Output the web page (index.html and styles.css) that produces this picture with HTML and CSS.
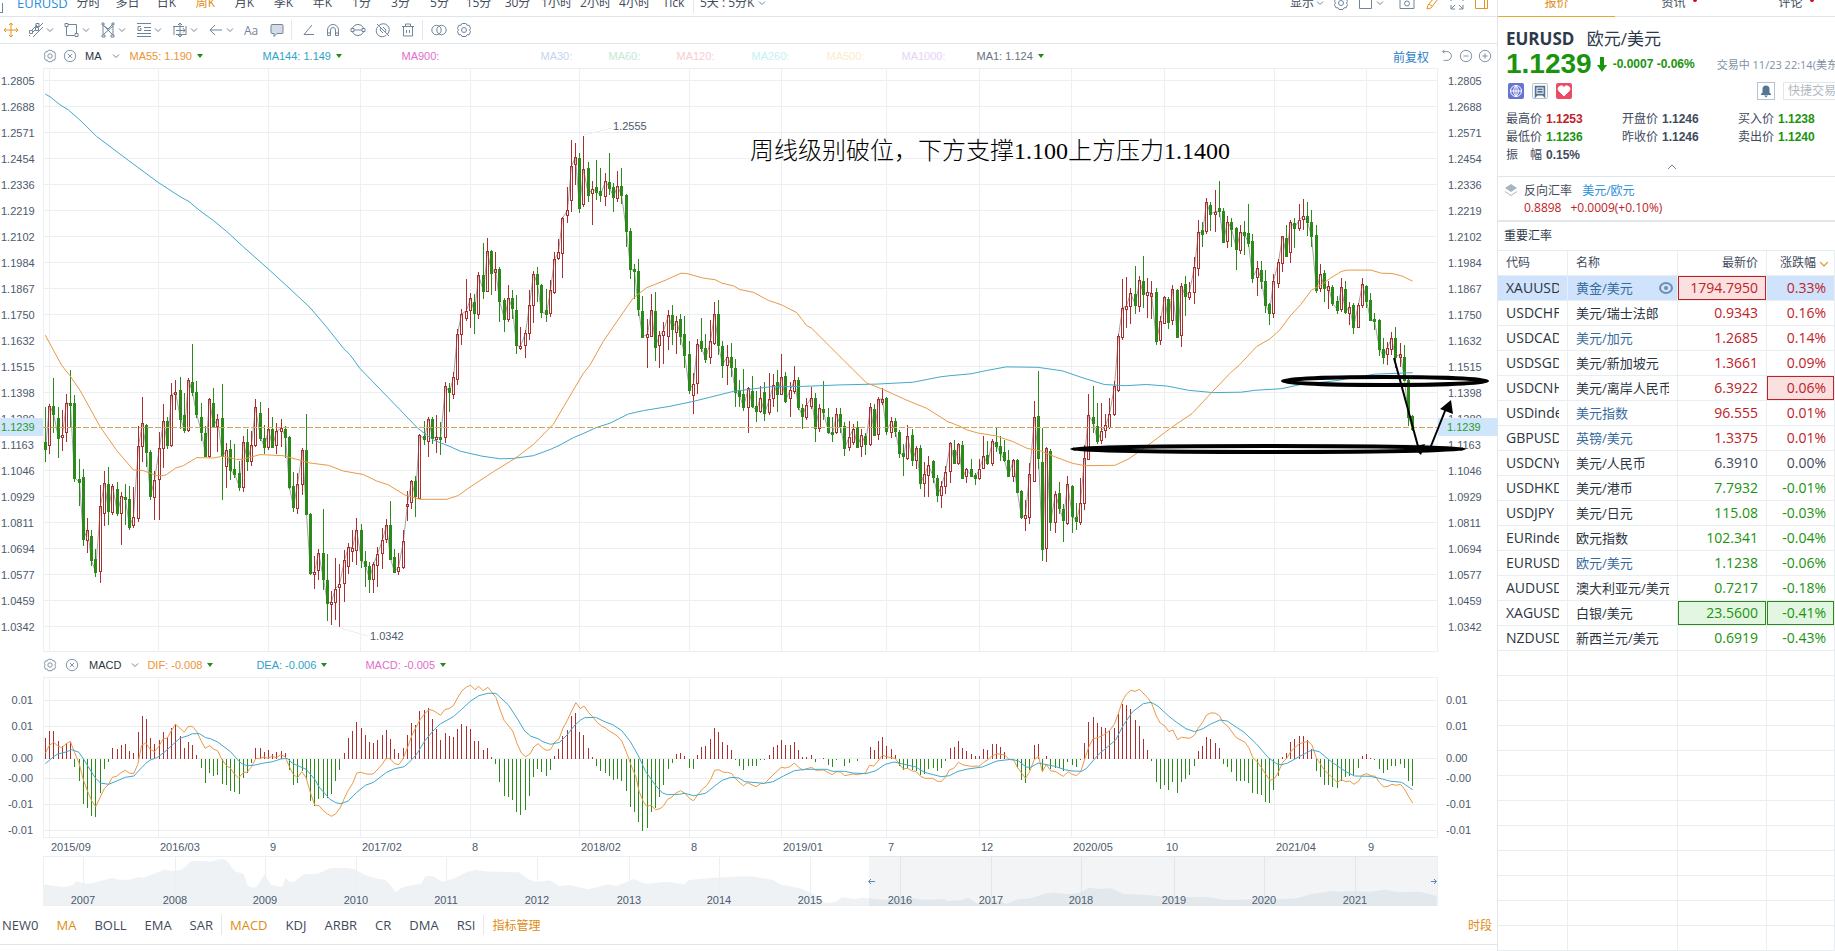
FILE: index.html
```html
<!DOCTYPE html>
<html lang="zh-CN">
<head>
    <meta charset="UTF-8">
    <meta name="viewport" content="width=device-width, initial-scale=1.0">
    <title>EURUSD 欧元/美元</title>
    <link rel="stylesheet" href="styles.css">
</head>
<body>
    <svg class="sprite" aria-hidden="true">
        <symbol id="i-chevron" viewBox="0 0 8 8"><path d="M1 2.500l3 3 3-3"/></symbol>
        <symbol id="i-down" viewBox="0 0 6 4"><path d="M0 0h6L3 4z"/></symbol>
        <symbol id="i-gear" viewBox="0 0 16 16"><path d="M6 1.500h4l1 1.700 2.200.1 1.300 3.200L13.400 8l1.100 1.500-1.300 3.200-2.200.1-1 1.700H6l-1-1.700-2.200-.1-1.300-3.200L2.600 8 1.500 6.500l1.300-3.200L5 3.200z"/><circle cx="8" cy="8" r="2.500"/></symbol>
        <symbol id="i-close" viewBox="0 0 16 16"><circle cx="8" cy="8" r="6.500"/><path d="M5.500 5.500l5 5M10.500 5.500l-5 5"/></symbol>
        <symbol id="i-move" viewBox="0 0 16 16"><path d="M8 1v14M1 8h14M6 3l2-2 2 2M6 13l2 2 2-2M3 6L1 8l2 2M13 6l2 2-2 2"/></symbol>
        <symbol id="i-channel" viewBox="0 0 16 16"><path d="M3 9l6-6M11 5l4-4M1 14l1-1M5 10l3-3M5 15L15 5M1.500 8.500h3v3h-3zM7.500 5.500h3v3h-3zM8 1.500h3v3H8z"/></symbol>
        <symbol id="i-rect" viewBox="0 0 16 16"><path d="M4 2.500h8.500V11M10.500 13.500H2.500V4M1 1.500h3v3H1zM11 11.500h3v3h-3z"/></symbol>
        <symbol id="i-pattern" viewBox="0 0 16 16"><path d="M3 12V3l10 10V4L3 13M3 3l5 4 5-5M2 13h3v2H2zM11 13h3v2h-3zM2 1h2v2H2zM12 1h2v2h-2z"/></symbol>
        <symbol id="i-lines" viewBox="0 0 16 16"><path d="M1 1.500h14M8 5.500h7M8 8.500h7M1 11.500h14M1 14.500h14M5 4.500H2v4h3v-2H4"/></symbol>
        <symbol id="i-measure" viewBox="0 0 16 16"><path d="M2 4v9M1 4.500h11M4 12.500h10M14 4v9M8 1v14M4 8.500h9M6 3l2-2 2 2M6 13l2 2 2-2M11 6l2 2.500-2 2"/></symbol>
        <symbol id="i-arrow" viewBox="0 0 16 16"><path d="M14 8H2M7 3L2 8l5 5"/></symbol>
        <symbol id="i-comment" viewBox="0 0 16 16"><path class="tint" d="M3 2.500h10q1 0 1 1v7q0 1-1 1H8l-3 3v-3H3q-1 0-1-1v-7q0-1 1-1z"/></symbol>
        <symbol id="i-angle" viewBox="0 0 16 16"><path d="M12 3L4 12.500h10"/></symbol>
        <symbol id="i-magnet" viewBox="0 0 16 16"><path d="M2.500 13.500V8a5.500 5.500 0 0 1 11 0v5.500h-3V8a2.500 2.500 0 0 0-5 0v5.500zM2.500 11h3M10.500 11h3"/></symbol>
        <symbol id="i-lock" viewBox="0 0 16 16"><path d="M2.500 6a6 6 0 0 1 11 0M2.500 10a6 6 0 0 0 11 0M1 6.500h3v3H1zM12 6.500h3v3h-3zM4 8h8"/></symbol>
        <symbol id="i-hide" viewBox="0 0 16 16"><path d="M4 3.500a6 6 0 0 1 8.500 8.500M11.500 13A6 6 0 0 1 3 4.500M2 2l12 12M6 6l-1 2 3 3M8 5l3 3-1 2"/></symbol>
        <symbol id="i-trash" viewBox="0 0 16 16"><path d="M2 4.500h12M5.500 4V2h5v2M3.500 5v9h9V5M6.500 8v3M9.500 8v3"/></symbol>
        <symbol id="i-link" viewBox="0 0 16 16"><circle cx="5.500" cy="8" r="4.700"/><circle cx="10.500" cy="8" r="4.700"/></symbol>
        <symbol id="i-undo" viewBox="0 0 16 16"><path d="M3 3h5a5 5 0 0 1 0 10H4M5 1L3 3l2 2"/></symbol>
        <symbol id="i-minus" viewBox="0 0 16 16"><circle cx="8" cy="8" r="6.500"/><path d="M5 8h6"/></symbol>
        <symbol id="i-plus" viewBox="0 0 16 16"><circle cx="8" cy="8" r="6.500"/><path d="M5 8h6M8 5v6"/></symbol>
        <symbol id="i-box" viewBox="0 0 16 16"><path d="M1.500 1.500h12v12h-12z"/></symbol>
        <symbol id="i-camera" viewBox="0 0 16 16"><path d="M1 3.500h14v10H1z"/><circle cx="8" cy="8.500" r="2.500"/></symbol>
        <symbol id="i-pencil" viewBox="0 0 16 16"><path d="M3 14l1-4 7-8 3 2-7 9zM5 9l3 2"/></symbol>
        <symbol id="i-expand" viewBox="0 0 16 16"><path d="M2 6V2h4M10 2h4v4M2 10v4h4M10 14h4v-4M2 14l4-4M14 14l-4-4"/></symbol>
        <symbol id="i-panel" viewBox="0 0 16 16"><path d="M1.500 1.500h12v12h-12zM10.500 1.500v12"/></symbol>
    </svg>

    <main class="chart">
        <nav class="periods">
            <button class="period-first" aria-label="布局"></button>
            <button class="symbol">EURUSD</button>
            <button>分时</button>
            <button>多日</button>
            <button>日K</button>
            <button class="active">周K</button>
            <button>月K</button>
            <button>季K</button>
            <button>年K</button>
            <button>1分</button>
            <button>3分</button>
            <button>5分</button>
            <button>15分</button>
            <button>30分</button>
            <button>1小时</button>
            <button>2小时</button>
            <button>4小时</button>
            <button>Tick</button>
            <span class="sep"></span>
            <button class="auto">5天 : 5分K <svg class="chev"><use href="#i-chevron"/></svg></button>
            <div class="view-tools">
                <button class="auto">显示<svg class="chev"><use href="#i-chevron"/></svg></button>
                <button class="auto" aria-label="设置"><svg class="icon"><use href="#i-gear"/></svg></button>
                <button class="auto window-size" aria-label="窗口"><svg class="icon"><use href="#i-box"/></svg><svg class="chev"><use href="#i-chevron"/></svg></button>
                <button class="auto" aria-label="截图"><svg class="icon"><use href="#i-camera"/></svg></button>
                <button class="auto active" aria-label="画线"><svg class="icon"><use href="#i-pencil"/></svg></button>
                <button class="auto" aria-label="全屏"><svg class="icon"><use href="#i-expand"/></svg></button>
                <button class="auto active" aria-label="侧栏"><svg class="icon"><use href="#i-panel"/></svg></button>
            </div>
        </nav>

        <div class="tools">
            <button class="tool active" aria-label="移动"><svg class="icon"><use href="#i-move"/></svg></button>
            <button class="tool-drop" aria-label="通道"><svg class="icon"><use href="#i-channel"/></svg><svg class="chev"><use href="#i-chevron"/></svg></button>
            <button class="tool-drop" aria-label="矩形"><svg class="icon"><use href="#i-rect"/></svg><svg class="chev"><use href="#i-chevron"/></svg></button>
            <button class="tool-drop" aria-label="形态"><svg class="icon"><use href="#i-pattern"/></svg><svg class="chev"><use href="#i-chevron"/></svg></button>
            <button class="tool-drop" aria-label="黄金分割"><svg class="icon"><use href="#i-lines"/></svg><svg class="chev"><use href="#i-chevron"/></svg></button>
            <button class="tool-drop" aria-label="测量"><svg class="icon"><use href="#i-measure"/></svg><svg class="chev"><use href="#i-chevron"/></svg></button>
            <button class="tool-drop" aria-label="箭头"><svg class="icon"><use href="#i-arrow"/></svg><svg class="chev"><use href="#i-chevron"/></svg></button>
            <button class="tool">Aa</button>
            <button class="tool" aria-label="注释"><svg class="icon"><use href="#i-comment"/></svg></button>
            <span class="sep"></span>
            <button class="tool" aria-label="角度"><svg class="icon"><use href="#i-angle"/></svg></button>
            <button class="tool" aria-label="吸附"><svg class="icon"><use href="#i-magnet"/></svg></button>
            <button class="tool" aria-label="锁定"><svg class="icon"><use href="#i-lock"/></svg></button>
            <button class="tool" aria-label="隐藏"><svg class="icon"><use href="#i-hide"/></svg></button>
            <button class="tool" aria-label="删除"><svg class="icon"><use href="#i-trash"/></svg></button>
            <span class="sep"></span>
            <button class="tool" aria-label="联动"><svg class="icon"><use href="#i-link"/></svg></button>
            <button class="tool" aria-label="画线设置"><svg class="icon"><use href="#i-gear"/></svg></button>
        </div>

        <div class="legend">
            <button aria-label="设置"><svg class="icon small"><use href="#i-gear"/></svg></button>
            <button aria-label="关闭"><svg class="icon small"><use href="#i-close"/></svg></button>
            <button class="legend-name">MA<svg class="chev"><use href="#i-chevron"/></svg></button>
            <span class="first ma55">MA55: 1.190<svg class="down"><use href="#i-down"/></svg></span>
            <span class="wide ma144">MA144: 1.149<svg class="down"><use href="#i-down"/></svg></span>
            <span class="wide ma900">MA900:</span>
            <span class="narrow ma30">MA30:</span>
            <span class="narrow ma60">MA60:</span>
            <span class="mid ma120">MA120:</span>
            <span class="mid ma260">MA260:</span>
            <span class="mid ma500">MA500:</span>
            <span class="mid ma1000">MA1000:</span>
            <span class="wide ma1">MA1: 1.124<svg class="down"><use href="#i-down"/></svg></span>
            <div class="legend-right">
                <button class="link">前复权</button>
                <button aria-label="还原"><svg class="icon small"><use href="#i-undo"/></svg></button>
                <button aria-label="缩小"><svg class="icon small"><use href="#i-minus"/></svg></button>
                <button aria-label="放大"><svg class="icon small"><use href="#i-plus"/></svg></button>
            </div>
        </div>

        <svg class="plot" id="price" viewBox="0 0 1497 584"></svg>

        <div class="legend macd">
            <button aria-label="设置"><svg class="icon small"><use href="#i-gear"/></svg></button>
            <button aria-label="关闭"><svg class="icon small"><use href="#i-close"/></svg></button>
            <button class="legend-name">MACD<svg class="chev"><use href="#i-chevron"/></svg></button>
            <span class="ma55">DIF: -0.008<svg class="down"><use href="#i-down"/></svg></span>
            <span class="ma144">DEA: -0.006<svg class="down"><use href="#i-down"/></svg></span>
            <span class="ma900">MACD: -0.005<svg class="down"><use href="#i-down"/></svg></span>
        </div>

        <svg class="plot" id="macd" viewBox="0 0 1497 179"></svg>
        <svg class="plot" id="navigator" viewBox="0 0 1497 50"></svg>

        <nav class="indicators">
            <button>NEW0</button>
            <button class="active">MA</button>
            <button>BOLL</button>
            <button>EMA</button>
            <button>SAR</button>
            <span class="sep"></span>
            <button class="active">MACD</button>
            <button>KDJ</button>
            <button>ARBR</button>
            <button>CR</button>
            <button>DMA</button>
            <button>RSI</button>
            <span class="sep"></span>
            <button class="active manage">指标管理</button>
            <button class="active manage last">时段</button>
        </nav>
    </main>

    <aside class="side">
        <nav class="side-tabs">
            <button class="active">报价</button>
            <button class="dot">资讯</button>
            <button class="dot">评论</button>
        </nav>

        <section class="quote">
            <h1>EURUSD <span>欧元/美元</span></h1>
            <div class="quote-price">
                <strong>1.1239</strong>
                <svg class="fall" viewBox="0 0 10 15"><path d="M3 0h4v8h3l-5 7-5-7h3z"/></svg>
                <b>-0.0007 -0.06%</b>
                <span class="status">交易中 11/23 22:14(美东)</span>
            </div>
            <div class="quote-actions">
                <button class="badge globe" aria-label="全球"><svg viewBox="0 0 16 16"><circle cx="8" cy="8" r="5.500"/><path d="M2.500 8h11M8 2.500v11M8 2.500q-5 5.500 0 11M8 2.500q5 5.500 0 11"/></svg></button>
                <button class="badge note" aria-label="笔记"><svg viewBox="0 0 16 16"><path d="M3 3h10v11l-2-2H5l-2 2zM5 6h6M5 9h6"/></svg></button>
                <button class="badge heart" aria-label="自选"><svg viewBox="0 0 16 16"><path d="M8 13L2.500 7.500a3 3 0 0 1 5.500-3 3 3 0 0 1 5.500 3z"/></svg></button>
                <button class="bell" aria-label="提醒"><svg viewBox="0 0 16 16"><path d="M3 12V11l1.500-1.500V6a3.500 3.500 0 0 1 7 0v3.500L13 11v1zM6 12.500h4L8 14.500z"/></svg></button>
                <button class="trade" disabled>快捷交易</button>
            </div>
            <dl class="stats">
                <div><dt>最高价</dt><dd class="up">1.1253</dd></div>
                <div><dt>开盘价</dt><dd>1.1246</dd></div>
                <div><dt>买入价</dt><dd class="fell">1.1238</dd></div>
                <div><dt>最低价</dt><dd class="fell">1.1236</dd></div>
                <div><dt>昨收价</dt><dd>1.1246</dd></div>
                <div><dt>卖出价</dt><dd class="fell">1.1240</dd></div>
                <div><dt>振　幅</dt><dd>0.15%</dd></div>
            </dl>
            <button class="fold" aria-label="收起"><svg viewBox="0 0 10 6"><path d="M1 5l4-4 4 4"/></svg></button>
        </section>

        <section class="reverse">
            <svg class="layers" viewBox="0 0 14 14"><path d="M7 1l6 4-6 4-6-4z"/><path d="M1 8l6 4 6-4v1l-6 4-6-4z"/></svg>
            <div>
                <p>反向汇率 <a href="#">美元/欧元</a></p>
                <p class="up"><span>0.8898</span><span>+0.0009(+0.10%)</span></p>
            </div>
        </section>

        <h2>重要汇率</h2>
        <table>
            <colgroup><col class="c-code"><col class="c-name"><col class="c-price"><col class="c-pct"></colgroup>
            <thead>
                <tr><th>代码</th><th>名称</th><th>最新价</th><th>涨跌幅<svg class="chev"><use href="#i-chevron"/></svg></th></tr>
            </thead>
            <tbody id="rates"></tbody>
        </table>
    </aside>
    <script src="script.js"></script>
</body>
</html>
```

FILE: styles.css
```css
* {
    box-sizing: border-box;
}

body {
    margin: 0;
    display: flex;
    min-height: 100vh;
    overflow: hidden;
    background: #fff;
    color: #3f4b5c;
    font-family: "Open Sans", "Noto Sans CJK SC", sans-serif;
    font-size: 12px;
}

button {
    padding: 0;
    border: 0;
    background: none;
    color: inherit;
    font: inherit;
    white-space: nowrap;
    cursor: pointer;
}

.sprite {
    position: absolute;
    width: 0;
    height: 0;
}

.icon {
    width: 16px;
    height: 16px;
    fill: none;
    stroke: #70859b;
}

.icon.small {
    width: 14px;
    height: 14px;
}

.active .icon {
    stroke: #e5941d;
}

.chev {
    width: 8px;
    height: 8px;
    fill: none;
    stroke: #70859b;
}

.down {
    width: 6px;
    height: 4px;
    margin-left: 5px;
    fill: #27881b;
}

.tint {
    fill: #d3dbe4;
}

.sep {
    flex: none;
    width: 1px;
    height: 20px;
    background: #e3e8ee;
}

.active {
    color: #e08b14;
}

/* chart side */
.chart {
    flex: 1;
    min-width: 0;
}

.periods {
    display: flex;
    align-items: flex-end;
    height: 17px;
    padding-bottom: 3px;
    border-bottom: 1px solid #dfe5ea;
}

.periods button {
    flex: none;
    width: 39px;
    height: 20px;
    line-height: 20px;
}

.periods .period-first {
    width: 3px;
    height: 10px;
    border: 1px solid #70859b;
    border-width: 0 1px 1px 0;
}

.periods .symbol {
    width: 66px;
    padding-left: 14px;
    text-align: left;
    color: #2a8fdb;
    font-size: 13px;
}

.periods .auto {
    display: flex;
    align-items: center;
    gap: 4px;
    width: auto;
}

.periods .sep {
    margin: 0 6px 0 0;
}

.view-tools {
    display: flex;
    gap: 9px;
    margin-left: auto;
    padding-right: 7px;
}

.view-tools .auto {
    gap: 2px;
}

.view-tools .window-size {
    margin-right: 6px;
}

.tools {
    display: flex;
    align-items: center;
    height: 27px;
    padding-left: 3px;
    border-bottom: 1px solid #dfe5ea;
}

.tools button {
    display: flex;
    flex: none;
    align-items: center;
    color: #70859b;
}

.tool {
    width: 16px;
    margin-right: 9px;
}

.tool-drop {
    gap: 2px;
    width: 36px;
}

.tools .sep {
    margin: 0 8px 0 -3px;
}

.legend {
    display: flex;
    align-items: center;
    height: 24px;
    padding-left: 43px;
    font-family: "Liberation Sans", "Noto Sans CJK SC", sans-serif;
    font-size: 11px;
    white-space: nowrap;
}

.legend button {
    display: flex;
    align-items: center;
    margin-right: 6px;
}

.legend .legend-name {
    gap: 10px;
    margin: 0 10px 0 2px;
    color: #2c3542;
}

.legend span {
    flex: none;
    display: flex;
    align-items: center;
}

.legend .first {
    width: 133px;
}

.legend .wide {
    width: 139px;
}

.legend .narrow {
    width: 68px;
}

.legend .mid {
    width: 75px;
}

.legend.macd {
    height: 25px;
}

.macd button {
    margin-right: 8px;
}

.macd .legend-name {
    margin-right: 8px;
}

.macd span {
    width: 109px;
}

.legend-right {
    display: flex;
    margin-left: auto;
}

.legend-right .link {
    margin-right: 11px;
    color: #2a7fc9;
    font-size: 12px;
}

.legend-right button {
    margin-right: 5px;
}

.ma55 { color: #ec9433; }
.ma144 { color: #2ea3c9; }
.ma900 { color: #df6fca; }
.ma30 { color: #c3d6ec; }
.ma60 { color: #c4e8d4; }
.ma120 { color: #f8cdd2; }
.ma260 { color: #c2f1f4; }
.ma500 { color: #fbeccb; }
.ma1000 { color: #e5d3f5; }
.ma1 { color: #6b737d; }

.plot {
    display: block;
    width: 100%;
    height: auto;
    fill: none;
    font-family: "Liberation Sans", sans-serif;
    font-size: 11px;
}

.plot text {
    fill: #4c5a6d;
}

.plot .end {
    text-anchor: end;
}

.plot .center {
    text-anchor: middle;
}

.grid {
    stroke: #edf0f2;
    shape-rendering: crispEdges;
}

.line-dif { stroke: #ea9a45; }
.line-dea { stroke: #42a9cc; }
.line-ma1 { stroke: #a3a3a3; }

.candle {
    shape-rendering: crispEdges;
}

.candle.r {
    stroke: #a93030;
}

.candle.g {
    stroke: #2b8a1a;
}

.last-line {
    stroke: #cfa65c;
    stroke-dasharray: 6 2;
}

.last-tag {
    fill: #cfe5fb;
}

.plot .last-text {
    fill: #2b9a2b;
}

.plot .note {
    fill: #000;
    font-family: "Liberation Serif", "Noto Sans CJK SC", serif;
    font-size: 24px;
    font-weight: 300;
}

.drawing {
    stroke: #000;
    stroke-width: 4;
}

.drawing .head {
    fill: #000;
    stroke: none;
}

.drawing .shaft {
    stroke-width: 2;
}

.area {
    fill: #eff2f5;
}

.window {
    fill: #8292a5;
    fill-opacity: 0.1;
}

.handle {
    stroke: #5d84b5;
}

.indicators {
    display: flex;
    align-items: center;
    gap: 18px;
    height: 39px;
    padding: 0 5px 0 2px;
    border-bottom: 1px solid #dfe5ea;
    font-size: 13px;
}

.indicators .sep {
    margin: 0 -10px;
}

.indicators .manage {
    font-size: 12px;
}

.indicators .last {
    margin-left: auto;
}

/* quote side */
.side {
    flex: none;
    width: 338px;
    height: 100vh;
    overflow: hidden;
    border-left: 1px solid #dfe5ea;
}

.side-tabs {
    display: flex;
    height: 17px;
    border-bottom: 1px solid #dfe5ea;
}

.side-tabs button {
    position: relative;
    flex: none;
    width: 117px;
    height: 17px;
    padding-bottom: 12px;
    line-height: 6px;
}

.side-tabs .active {
    border-bottom: 1px solid #e5a637;
}

.side-tabs .dot::after {
    content: "";
    position: absolute;
    top: -2px;
    right: 35px;
    width: 4px;
    height: 4px;
    border-radius: 50%;
    background: #d0021b;
}

.quote {
    height: 160px;
    padding: 10px 0 0 8px;
    border-bottom: 1px solid #dfe5ea;
    white-space: nowrap;
}

h1 {
    margin: 0;
    color: #2c3949;
    font-size: 17px;
    line-height: 24px;
}

h1 span {
    margin-left: 8px;
    font-weight: 400;
}

.quote-price {
    display: flex;
    align-items: center;
    height: 26px;
    color: #1a930d;
    font-family: "Liberation Sans", sans-serif;
}

.quote-price strong {
    font-size: 28px;
}

.fall {
    flex: none;
    width: 10px;
    height: 15px;
    margin: 0 6px 0 5px;
    fill: #1a930d;
}

.status {
    margin-left: 22px;
    color: #8290a3;
    font-family: "Open Sans", "Noto Sans CJK SC", sans-serif;
    font-size: 11px;
}

.quote-actions {
    display: flex;
    align-items: center;
    gap: 8px;
    height: 28px;
    padding-left: 2px;
}

.badge {
    flex: none;
    width: 16px;
    height: 16px;
    border-radius: 2px;
}

.badge svg,
.bell svg {
    display: block;
    width: 100%;
    fill: none;
    stroke: #fff;
}

.globe {
    background: #6674d4;
}

.note.badge {
    border: 1px solid #b6c2d0;
}

.note.badge svg {
    stroke: #52708f;
    stroke-width: 2;
}

.heart {
    background: #ec4b66;
}

.heart svg {
    fill: #fff;
}

.bell {
    flex: none;
    width: 18px;
    height: 18px;
    margin-left: 177px;
    border: 1px solid #b6c2d0;
}

.bell svg {
    fill: #557595;
    stroke: none;
}

.trade {
    flex: none;
    height: 18px;
    padding: 0 4px;
    border: 1px solid #e3e6ea;
    color: #b3b9c1;
    line-height: 16px;
}

.stats {
    display: grid;
    grid-template-columns: repeat(3, 116px);
    margin: 5px 0 0;
    line-height: 18px;
}

.stats div {
    display: flex;
    gap: 4px;
}

.stats dd {
    margin: 0;
    font-family: "Liberation Sans", sans-serif;
    font-weight: 700;
}

.up,
.stats .up {
    color: #c02127;
}

.stats .fell,
.fell {
    color: #1a930d;
}

.fold {
    display: block;
    width: 10px;
    height: 6px;
    margin: 0 0 0 161px;
}

.fold svg {
    display: block;
    fill: none;
    stroke: #70859b;
}

.reverse {
    display: flex;
    gap: 6px;
    height: 45px;
    padding: 5px 0 0 6px;
    border-bottom: 2px solid #e2e6e9;
}

.reverse p {
    margin: 0;
    line-height: 17px;
}

.reverse a {
    margin-left: 7px;
    color: #2a8fdb;
    text-decoration: none;
}

.reverse .up span {
    margin-right: 9px;
}

.layers {
    width: 14px;
    height: 14px;
    margin-top: 1px;
    fill: #a6b4c3;
}

h2 {
    margin: 0;
    padding-left: 6px;
    border-bottom: 1px solid #e4eaee;
    color: #2c3949;
    font-size: 12px;
    font-weight: 400;
    line-height: 28px;
}

table {
    width: 100%;
    table-layout: fixed;
    border-spacing: 0;
    font-size: 14px;
}

.c-code { width: 70px; }
.c-name { width: 110px; }
.c-price { width: 89px; }

th,
td {
    height: 25px;
    padding: 0 8px;
    border: 1px solid #e9eef1;
    border-width: 0 1px 1px 0;
    text-align: right;
    line-height: 24px;
    white-space: nowrap;
}

th {
    font-size: 12px;
    font-weight: 400;
}

th:last-child {
    padding-right: 5px;
}

th .chev {
    width: 10px;
    height: 10px;
    margin-left: 3px;
    stroke: #e5941d;
    vertical-align: middle;
}

th:nth-child(-n+2),
td:nth-child(-n+2) {
    text-align: left;
}

td:nth-child(-n+2) {
    color: #2c3542;
}

td:nth-child(2) {
    font-size: 13px;
}

td span {
    display: block;
    height: 24px;
    overflow: hidden;
}

tr td.blue {
    color: #376a9e;
}

tr.selected td {
    background: #cfe4fc;
}

td .with-eye {
    display: flex;
    align-items: center;
    justify-content: space-between;
    margin-right: -4px;
}

.eye {
    width: 14px;
    height: 12px;
    fill: none;
    stroke: #6f8db0;
    stroke-width: 2;
}

tr td.flash-up {
    background: #fbe0e0;
    box-shadow: inset 0 0 0 1px #c02127;
}

tr td.flash-down {
    background: #e3f6e1;
    box-shadow: inset 0 0 0 1px #2b8a1a;
}
```

FILE: script.js
```js
// one weekly candle per item: colour, high, body top, body bottom, low
const candles = `g 907 998 1017 1050,r 898 903 1007 1029,g 831 905 924 975,g 907 936 988 1040,r 915 979 986 1022,r 873 895 973 999,g 810 895 901 960,g 875 896 1092 1103,g 1043 1095 1102 1165,g 1069 1090 1251 1270,
r 1197 1229 1253 1287,g 1227 1244 1307 1322,g 1277 1304 1337 1351,r 1111 1166 1336 1367,r 1073 1106 1183 1217,g 1064 1108 1178 1215,r 1107 1113 1180 1188,g 1102 1121 1183 1191,r 1130 1139 1183 1267,g 1107 1142 1148 1214,
g 1113 1147 1219 1228,r 1116 1194 1216 1222,r 956 1009 1198 1206,r 881 949 1009 1050,g 950 954 1023 1064,g 1019 1024 1138 1151,r 1075 1098 1141 1201,r 972 1013 1096 1201,r 898 943 1013 1065,g 932 943 1005 1016,
r 844 875 1005 1011,r 837 868 874 914,g 828 863 937 963,g 870 928 967 975,r 832 836 968 973,g 742 841 868 877,g 840 868 924 936,g 896 934 972 996,g 956 974 1034 1037,r 882 886 1034 1040,
g 857 896 956 959,r 924 938 956 1023,g 847 936 1036 1150,r 1001 1019 1060 1118,g 993 1017 1072 1097,g 1004 1068 1082 1092,g 1049 1080 1115 1126,r 983 997 1117 1128,g 964 997 1048 1075,r 970 1007 1048 1060,
r 886 908 1005 1010,g 894 922 988 996,g 954 988 1011 1030,r 909 965 1011 1018,g 932 964 1010 1014,r 948 970 1007 1030,r 938 962 970 1010,g 957 963 985 1040,g 982 985 1117 1120,g 1077 1113 1167 1180,
r 1080 1109 1171 1186,r 1014 1019 1108 1136,g 925 1019 1186 1188,g 1184 1187 1340 1347,r 1297 1338 1344 1382,r 1278 1288 1333 1358,g 1173 1288 1355 1385,g 1291 1360 1420 1466,r 1388 1415 1422 1477,r 1301 1381 1417 1463,
r 1317 1370 1376 1482,r 1281 1307 1367 1416,r 1262 1273 1321 1342,r 1228 1274 1282 1312,r 1197 1227 1280 1320,g 1213 1227 1307 1327,g 1284 1310 1322 1376,g 1313 1322 1355 1393,r 1312 1318 1355 1393,r 1273 1291 1319 1376,
r 1223 1254 1289 1331,r 1199 1216 1251 1262,g 1152 1216 1303 1305,g 1278 1298 1337 1341,r 1287 1325 1336 1347,r 1228 1257 1325 1330,r 1126 1159 1165 1205,r 1098 1101 1154 1172,g 1086 1101 1140 1194,r 976 980 1145 1147,
g 943 982 991 1006,r 932 937 996 1037,g 932 938 989 1004,r 927 984 990 1027,g 945 984 990 1032,r 841 853 985 1001,g 845 857 868 920,r 815 829 874 885,r 703 716 833 848,r 650 664 717 744,
r 572 655 673 682,r 609 623 654 700,g 612 632 660 715,r 555 563 665 677,g 477 563 603 624,r 466 500 603 605,g 497 498 556 613,r 502 546 553 604,g 542 546 629 684,g 622 626 677 712,
r 588 622 677 684,g 601 623 649 676,g 613 652 746 767,r 698 748 753 757,r 706 713 745 778,r 601 640 714 731,r 551 559 641 686,g 541 559 585 632,g 585 587 659 674,g 598 654 663 684,
r 575 602 662 671,r 502 521 607 612,r 468 503 518 522,r 411 413 505 570,r 332 393 406 425,r 209 277 367 396,r 217 254 273 326,g 243 257 387 401,r 199 286 375 383,g 267 283 352 371,
r 315 336 348 431,g 262 332 345 365,g 281 341 353 371,r 296 317 356 381,g 243 319 334 353,g 322 333 357 396,r 291 330 360 371,g 281 329 353 376,g 350 353 446 488,g 439 446 545 572,
g 533 546 552 624,g 520 551 650 668,g 617 656 723 726,r 677 717 723 804,r 612 654 720 724,g 607 656 749 786,r 708 719 745 804,r 684 708 719 794,r 654 667 722 757,g 641 667 702 744,
r 668 682 710 768,g 663 678 720 744,g 668 716 770 804,g 734 768 861 874,r 817 846 875 924,r 730 741 845 872,g 675 735 753 762,g 717 752 780 791,r 680 735 775 794,r 632 664 739 744,
g 627 664 746 770,g 735 747 796 830,r 744 775 798 848,g 739 776 801 828,g 782 805 868 906,g 835 863 877 906,g 808 873 906 916,r 855 857 907 974,g 826 866 905 909,g 864 903 916 946,
r 852 882 918 923,g 841 868 923 942,r 818 887 921 928,r 821 848 884 906,g 810 841 872 920,r 768 829 873 875,g 815 826 890 895,r 842 861 884 933,r 800 837 866 873,g 829 836 908 915,
g 899 909 929 964,r 883 902 934 940,r 855 882 903 911,g 871 882 961 998,r 899 909 961 972,g 838 912 919 940,g 909 933 973 978,g 932 973 978 997,r 909 926 973 977,g 910 925 956 974,
g 947 957 1014 1035,r 943 984 1011 1021,r 951 963 999 1006,g 943 959 1010 1013,r 964 980 1008 1037,g 974 982 1003 1031,r 896 908 1003 1008,g 899 912 979 982,r 880 887 976 994,r 857 885 893 902,
g 881 882 970 980,r 932 944 972 987,g 935 943 970 986,g 966 972 1026 1040,g 1003 1028 1036 1086,r 953 983 1041 1044,g 965 981 1046 1060,r 1008 1015 1045 1070,g 1005 1015 1106 1120,r 1050 1083 1106 1141,
r 1036 1059 1085 1141,g 1044 1049 1090 1104,g 1084 1091 1137 1154,r 1100 1113 1136 1170,r 1060 1076 1114 1134,r 997 1001 1075 1106,g 993 1018 1054 1056,r 1001 1003 1052 1058,g 996 1005 1091 1092,r 1066 1069 1088 1104,
g 1043 1068 1087 1090,g 1079 1085 1092 1110,r 1043 1068 1093 1097,r 983 1036 1067 1070,g 996 1031 1054 1059,r 991 996 1054 1060,g 962 997 1009 1025,g 982 1009 1026 1047,g 993 1023 1046 1050,g 1019 1045 1086 1089,
r 1043 1046 1087 1103,g 1043 1046 1130 1132,g 1123 1127 1195 1199,r 1149 1189 1198 1230,r 1053 1083 1193 1212,r 892 934 1099 1102,g 813 931 1039 1069,g 962 1051 1277 1309,r 1011 1014 1276 1311,g 1016 1021 1208 1230,
r 1127 1134 1208 1235,g 1103 1132 1171 1185,g 1159 1172 1203 1259,r 1087 1108 1211 1214,g 1110 1112 1192 1235,g 1158 1194 1205 1229,r 1092 1157 1206 1214,r 1006 1040 1157 1176,r 874 928 1043 1046,g 852 934 949 975,
g 895 957 996 1004,r 896 969 992 1004,r 924 955 968 988,r 884 926 960 963,r 840 852 925 930,r 715 720 863 867,r 572 648 725 731,r 567 643 650 699,r 597 609 644 690,g 538 611 640 664,
r 565 575 643 658,g 513 577 612 648,r 569 607 614 675,r 578 609 616 677,g 595 606 734 744,r 668 682 731 744,r 617 619 686 690,g 619 625 684 703,r 589 599 680 693,g 598 601 724 727,
r 583 591 719 750,g 564 586 617 668,r 579 605 620 628,r 515 541 607 637,r 418 449 544 565,g 424 443 454 488,r 361 372 446 455,g 370 379 402 446,r 340 396 403 449,g 316 387 395 410,
g 388 395 475 477,r 408 422 472 490,g 412 424 441 488,g 436 439 493 549,r 432 449 496 508,g 421 449 456 510,g 376 452 478 488,g 454 473 569 583,r 525 544 566 617,g 525 549 577 598,
g 548 578 641 660,g 635 637 660 692,r 560 577 660 673,r 520 528 584 596,r 459 461 530 554,g 430 465 511 513,r 417 423 503 531,g 413 427 438 491,r 376 417 440 447,r 363 408 416 444,
g 371 408 423 460,g 391 423 460 488,g 431 457 601 609,r 533 558 597 607,g 550 556 597 632,r 577 591 601 650,g 589 594 635 643,g 616 631 653 664,r 570 594 650 658,g 577 598 658 664,
r 632 645 661 692,g 636 641 697 716,r 636 639 698 700,r 570 586 640 648,g 587 591 629 648,g 609 627 679 682,g 661 676 682 705,g 678 680 755 773,g 727 755 775 794,r 738 752 769 797,
r 711 727 754 771,g 698 727 775 805,r 740 769 777 802,g 745 776 835 838,g 833 836 932 956,g 928 930 965 970`.split(",").map(c => c.trim().split(" "));

// histogram heights, same order as the candles
const bars = [63, 85, 85, 54, 38, 48, 50, -25, -65, -135, -148, -170, -175, -102, -29, -8, 34, 31, 43, 46, 24, 18, 81, 130, 120, 63, 44, 57, 81, 66, 92, 104, 70, 34, 52, 43, 12, -28, -72, -42, -50, -47, -74, -79, -95, -98, -104, -58, -42, -12,
    34, 34, 21, 27, 16, 21, 24, 18, -34, -77, -71, -35, -64, -125, -142, -120, -116, -118, -104, -67, -34, 18, 64, 85, 112, 94, 72, 52, 48, 58, 72, 88, 60, 30, 18, 34, 73, 108, 102, 145, 148, 153, 120, 89, 57, 79, 70, 67, 91, 105,
    99, 91, 55, 54, 27, 34, 7, -16, -68, -112, -114, -124, -160, -169, -154, -110, -53, -29, -39, -50, -32, 10, 30, 70, 88, 128, 137, 81, 73, 34, 7, -20, -36, -42, -50, -62, -59, -65, -97, -145, -160, -190, -215, -206, -158, -146, -113, -77, -31, -11,
    16, 19, 8, -28, -31, 13, 37, 39, 61, 94, 80, 52, 43, 27, -4, -20, -34, -20, -22, -22, -4, -3, 12, 37, 43, 58, 43, 43, 52, 27, 7, 7, 12, -10, 0, 4, -17, -23, -4, 0, -20, -11, -1, -7, 0, 0, 37, 27, 55, 67,
    40, 31, 12, -22, -34, -28, -32, -35, -48, -46, -30, -28, -37, -28, -7, 34, 37, 55, 34, 25, 16, 8, 10, 31, 27, 46, 46, 37, 22, 0, -2, -28, -64, -73, -32, 43, 46, -40, 10, -31, -28, -28, -37, -8, -17, -23, -4, 48, 111, 127,
    108, 97, 94, 85, 94, 135, 166, 162, 150, 118, 99, 60, 27, -5, -70, -89, -77, -92, -70, -101, -68, -59, -47, -20, 25, 40, 67, 60, 48, 34, -14, -25, -40, -67, -67, -67, -71, -103, -106, -109, -128, -131, -94, -50, 7, 19, 52, 61, 70, 70,
    58, 30, -37, -53, -77, -77, -85, -88, -65, -53, -50, -52, -28, 10, 16, 4, -4, -29, -43, -34, -20, -20, -14, -28, -65, -80];

// every line comes in segments: [left edge, horizontal scale, points]
const ma144 = [
    [0, 3, "136,89 150,96 180,117 205,130 235,153 260,174 290,200 385,262 475,320 540,357 567,370 600,394 640,419 680,448 730,488 805,546 870,598 930,647 980,698 1030,753 1050,770 1080,806 1120,842 1200,914 1253,962 1300,993 1350,1010"],
    [450, 3, "30,1022 95,1035 150,1042 190,1041 250,1034 300,1018 330,1006 370,987 400,976 440,960 480,949 535,925 580,916 660,905 730,892 850,866 960,854 1060,853 1170,849 1280,847 1390,842 1470,828"],
    [950, 2.851, "0,825 60,820 100,812 160,802 250,803 320,812 380,831 440,848 500,851 560,848 620,852 680,863 750,869 830,868 870,863 945,859 1000,848 1100,838 1210,821 1319,817"]
];
const ma55 = [
    [0, 3, "136,719 185,798 210,825 240,863 300,958 320,983 350,1020 400,1071 430,1073 470,1086 490,1086 500,1083 527,1066 550,1060 590,1039 640,1040 670,1035 710,1044 730,1043 780,1031 850,1034 930,1053 985,1059 1030,1074 1090,1083 1130,1100 1165,1110 1215,1137 1260,1148 1340,1148"],
    [450, 3, "0,1145 25,1138 60,1116 130,1076 195,1041 250,1005 310,952 365,870 400,819 420,797 460,735 520,659 550,622 590,595 650,574 693,557 710,558 760,570 795,574 815,583 850,590 870,600 910,607 955,628 995,640 1040,660 1070,694 1085,701 1200,801 1250,844 1300,861 1370,889 1430,910 1495,946"],
    [950, 2.851, "0,947 25,956 50,967 80,975 130,982 180,997 220,1015 260,1022 300,1037 350,1054 385,1060 470,1059 510,1042 570,1003 630,961 690,924 750,865 800,817 825,797 875,748 910,730 940,706 970,669 1000,639 1030,602 1060,586 1085,570 1115,553 1130,549 1200,549 1230,557 1260,558 1290,565 1319,578"]
];
const dif = [
    [0, 2.0907, "95,337 103,313 112,304 121,315 129,320 138,309 147,301 156,335 165,365 174,415 183,450 192,480 200,497 218,443 227,430 235,409 244,406 253,395 262,388 271,397 280,397 288,370 296,313 305,306 314,325 323,332 332,316 341,294 350,291 358,270 367,250 376,261 385,274 393,257 402,256 411,271 420,298 429,322 438,314 447,325 455,329 464,355 473,373 482,382 490,399 499,411 508,395 517,393 526,377 535,352 543,353 552,348 560,352 569,346 578,350 587,341 596,347 605,377 613,400 622,410 631,392 640,410 649,455 658,492 667,494 675,508 684,518 693,526 702,518 711,501 719,475 728,448 737,428 746,396 755,394 764,398 773,400 781,398 790,384 799,370 808,350 817,355 825,368 834,371 843,352 852,320 861,284 870,258 879,235 888,218 897,206 905,208 913,215 921,223 930,206 940,202 948,194 957,170 966,149 975,138 984,133 993,146 1001,136 1010,149 1020,139 1028,153 1037,170 1045,204 1054,238 1072,270 1081,308 1090,336 1099,347 1108,339 1116,318 1125,308 1134,320 1142,328 1151,326 1160,303 1169,293 1177,262 1186,238 1195,210 1204,185 1213,203 1221,195 1231,215 1240,229 1249,245 1258,255 1266,261 1275,271 1290,284 1300,300 1310,335 1320,375 1330,410 1336,450 1345,482 1352,496 1362,493 1370,506 1380,503 1387,495 1396,475 1405,468 1413,456 1423,449 1432,457 1442,473 1450,479 1459,461 1468,445 1477,434 1486,415 1494,388 1503,386 1512,394 1521,394 1530,398 1538,413 1547,425"],
    [740, 2.0632, "7,434 15,425 33,437 42,428 51,427 68,402 85,379 94,381 103,377 112,366 121,379 129,387 148,379 156,388 172,387 181,394 190,401 199,392 207,393 216,404 233,399 242,401 259,396 267,373 276,375 285,360 294,342 302,347 320,352 329,370 337,384 346,382 355,390 363,391 372,405 381,412 398,412 407,421 416,421 424,408 432,387 441,382 451,364 459,371 476,376 494,375 502,365 511,356 520,345 530,338 546,342 555,355 565,358 572,378 589,412 597,394 607,356 616,346 624,392 632,370 641,390 650,391 667,406 677,392 684,399 694,404 703,392 710,360 719,320 728,294 737,290 745,286 754,278 763,268 772,250 780,220 789,180 797,160 806,148 815,151 824,145 841,170 850,190 859,225 867,246 877,256 885,272 893,267 903,296 911,289 928,292 938,282 945,262 954,245 962,223 971,216 980,216 989,224 997,245 1006,255 1024,290 1041,303 1050,320 1058,350 1067,362 1076,380 1084,398 1093,418 1102,414 1110,396 1119,365 1128,352 1137,330 1154,308 1172,301 1180,312 1189,350 1206,388 1215,400 1232,424 1241,416 1250,422 1258,420 1267,430 1276,421 1284,402 1293,398 1302,404 1311,406 1319,424 1328,438 1337,436 1345,430 1354,433 1363,430 1372,447 1380,468 1388,486"]
];
const dea = [
    [0, 2.0907, "95,368 112,347 121,339 138,333 150,326 165,334 175,355 190,390 200,412 210,426 227,430 244,420 262,409 280,405 296,380 305,367 314,357 328,350 345,332 358,315 376,292 393,284 402,278 417,278 430,290 440,293 455,303 482,332 499,360 508,370 517,374 530,373 552,366 570,362 587,354 600,352 613,368 640,385 658,415 667,438 690,475 702,485 713,488 728,480 745,455 764,433 781,424 808,394 825,383 845,377 854,366 870,342 888,300 905,270 921,248 948,227 965,205 984,180 1001,164 1020,157 1037,157 1045,168 1063,192 1081,232 1097,270 1110,286 1125,293 1135,302 1151,310 1170,304 1186,281 1200,255 1213,238 1222,230 1245,229 1266,243 1281,251 1300,269 1318,302 1335,345 1350,392 1370,432 1385,456 1396,461 1420,460 1432,457 1450,464 1475,457 1495,434 1510,418 1528,409 1545,411"],
    [740, 2.0632, "0,413 10,422 50,427 68,422 90,405 112,389 135,385 180,385 190,391 215,391 233,396 260,398 280,389 300,370 318,363 345,372 363,378 380,394 415,407 432,404 450,391 470,384 500,378 530,360 560,355 575,360 590,378 600,379 615,366 650,376 670,386 685,390 705,391 715,382 740,340 775,297 790,255 810,212 832,188 848,184 862,195 885,226 900,243 920,263 938,272 955,263 970,250 990,237 1005,240 1040,274 1065,308 1090,350 1108,369 1118,371 1130,366 1165,338 1180,327 1195,332 1220,362 1250,392 1268,405 1300,406 1325,414 1340,420 1365,424 1388,446"]
];
const history = [
    [0, 2.0907, "91,730 110,734 135,738 152,732 160,720 172,726 185,728 210,720 235,711 250,716 270,716 290,708 300,711 325,697 345,685 355,690 380,686 400,660 425,660 440,662 465,653 475,660 490,690 510,700 518,735 530,740 538,735 553,700 567,732 590,738 597,710 605,722 615,722 635,700 665,698 690,682 710,680 730,682 740,684 760,700 785,712 805,716 815,730 827,753 840,740 850,735 880,728 890,705 905,706 925,722 950,712 975,694 995,686 1010,690 1030,692 1050,692 1085,694 1105,715 1120,722 1150,718 1170,735 1190,732 1230,745 1250,738 1270,730 1290,735 1325,714 1350,728 1395,722 1430,730 1440,717 1490,710 1530,708"],
    [740, 2.0632, "0,706 30,707 70,718 85,732 100,734 130,745 160,765 175,785 195,784 210,769 235,775 250,770 300,776 350,770 380,776 420,775 430,780 455,778 470,770 490,788 510,778 540,782 550,788 570,776 600,772 630,758 650,755 680,760 700,756 720,740 740,744 765,742 790,758 840,762 880,768 960,768 1000,776 1040,776 1090,768 1110,775 1150,772 1180,758 1200,755 1220,750 1240,752 1270,750 1300,752 1330,746 1360,754 1400,752 1425,760 1437,765"]
];

const gridX = [49, 158, 268, 360, 470, 579, 689, 781, 886, 979, 1071, 1164, 1274, 1366];
const dates = ["2015/09", "2016/03", "9", "2017/02", "8", "2018/02", "8", "2019/01", "7", "12", "2020/05", "10", "2021/04", "9"];
const prices = ["1.2805", "1.2688", "1.2571", "1.2454", "1.2336", "1.2219", "1.2102", "1.1984", "1.1867", "1.1750", "1.1632", "1.1515", "1.1398", "1.1280", "1.1163", "1.1046", "1.0929", "1.0811", "1.0694", "1.0577", "1.0459", "1.0342"];
const LEFT = 43;
const RIGHT = 1437;

const candleX = i => Math.round(45 + i * 4.207);
const priceY = v => v / 2.613 - 8;
const macdY = v => v / 3 - 36;

function line(x1, y1, x2, y2, cls) {
    return `<path class="${cls}" d="M${x1} ${y1}L${x2} ${y2}"/>`;
}

function text(x, y, value, cls = "") {
    return `<text x="${x}" y="${y}" class="${cls}">${value}</text>`;
}

function points(segments, toY) {
    return segments.map(([left, scale, list]) => list.split(" ").map(p => {
        const [x, y] = p.split(",");
        return `${(left + x / scale).toFixed(1)},${toY(y).toFixed(1)}`;
    }).join(" ")).join(" ");
}

function polyline(segments, toY, cls) {
    return `<polyline class="${cls}" points="${points(segments, toY)}"/>`;
}

function drawPrice() {
    let out = "";
    gridX.forEach(x => out += line(x + 0.5, 0, x + 0.5, 583, "grid"));
    out += `<path class="grid" d="M${LEFT}.5 .5H${RIGHT}.5V583.5H${LEFT}.5z"/>`;
    prices.forEach((p, i) => {
        const y = 12.5 + i * 26;
        out += line(LEFT, y, RIGHT, y, "grid");
        out += text(1, y + 4, p) + text(1448, y + 4, p);
    });

    const closes = candles.map((c, i) => `${candleX(i) + 0.5},${priceY(c[0] === "r" ? c[2] : c[3]).toFixed(1)}`);
    out += `<polyline class="line-ma1" points="${closes.join(" ")}"/>`;
    candles.forEach(([color, high, top, bottom, low], i) => {
        const x = candleX(i) + 0.5;
        const [h, t, b, l] = [high, top, bottom, low].map(v => Math.round(priceY(v)));
        const height = Math.max(b - t, 1);
        out += `<path class="candle ${color}" d="M${x} ${h}V${t}M${x} ${b}V${l}"/>`;
        out += `<rect class="candle ${color}" x="${x - 1}" y="${t + 0.5}" width="2" height="${height}" fill="${color === "g" ? "#2b8a1a" : "none"}"/>`;
    });
    out += polyline(ma144, priceY, "line-dea") + polyline(ma55, priceY, "line-dif");
    out += line(LEFT, 359.5, RIGHT, 359.5, "last-line");
    out += `<rect class="last-tag" x="0" y="350" width="43" height="18"/><rect class="last-tag" x="1438" y="350" width="59" height="18"/>`;
    out += text(1, 363, "1.1239", "last-text") + text(1447, 363, "1.1239", "last-text");
    out += line(584, 67, 612, 60, "grid") + text(613, 62, "1.2555");
    out += line(340, 560, 368, 568, "grid") + text(370, 572, "1.0342");
    out += text(750, 91, "周线级别破位，下方支撑1.100上方压力1.1400", "note");

    // hand-drawn support / resistance zones and the expected move
    out += `<g class="drawing">
        <ellipse cx="1385" cy="313" rx="102" ry="4"/>
        <ellipse cx="1268" cy="381" rx="196" ry="3"/>
        <path class="shaft" d="M1394 290L1419 382M1429 383L1447 338"/>
        <path class="head" d="M1440 341L1451 332L1453 346zM1412 379L1425 376L1421 387z"/>
    </g>`;
    document.getElementById("price").innerHTML = out;
}

function drawMacd() {
    let out = `<path class="grid" d="M${LEFT}.5 .5H${RIGHT}.5V160.5H${LEFT}.5z"/>`;
    gridX.forEach((x, i) => out += line(x + 0.5, 0, x + 0.5, 160, "grid") + text(x + 2, 174, dates[i]));
    [["0.01", 23], ["0.01", 49], ["0.00", 81], ["-0.00", 101], ["-0.01", 127], ["-0.01", 153]].forEach(([label, y]) => {
        out += line(LEFT, y + 0.5, RIGHT, y + 0.5, "grid");
        out += text(33, y + 4, label, "end") + text(1446, y + 4, label);
    });
    bars.forEach((v, i) => {
        const x = candleX(i) + 0.5;
        if (v) out += line(x, 82, x, Math.round(82 - v / 3), v > 0 ? "candle r" : "candle g");
    });
    out += polyline(dif, macdY, "line-dif") + polyline(dea, macdY, "line-dea");
    document.getElementById("macd").innerHTML = out;
}

function drawNavigator() {
    let out = `<polygon class="area" points="43,50 ${points(history, v => v / 3 - 215)} 1437,50"/>`;
    [83, 175, 265, 356, 446, 537, 629, 719, 810, 900, 991, 1081, 1174, 1264, 1355].forEach((x, i) => {
        out += line(x + 0.5, 0, x + 0.5, 50, "grid") + text(x, 48, 2007 + i, "center");
    });
    out += `<path class="grid" d="M${LEFT}.5 .5H${RIGHT}.5V49.5H${LEFT}.5z"/>`;
    out += `<rect class="window" x="869" y="0" width="568" height="50"/>`;
    out += `<path class="handle" d="M875 25.5h-6M871 23l-2.500 2.500 2.500 2.500M1431 25.5h5M1434 23l2.500 2.500-2.500 2.500"/>`;
    document.getElementById("navigator").innerHTML = out;
}

// code, name, price, change, options
const rates = [
    ["XAUUSD", "黄金/美元", "1794.7950", "0.33%", "blue selected flash-price"],
    ["USDCHF", "美元/瑞士法郎", "0.9343", "0.16%", ""],
    ["USDCAD", "美元/加元", "1.2685", "0.14%", "blue"],
    ["USDSGD", "美元/新加坡元", "1.3661", "0.09%", ""],
    ["USDCNH", "美元/离岸人民币", "6.3922", "0.06%", "flash-pct"],
    ["USDindex", "美元指数", "96.555", "0.01%", "blue"],
    ["GBPUSD", "英镑/美元", "1.3375", "0.01%", "blue"],
    ["USDCNY", "美元/人民币", "6.3910", "0.00%", ""],
    ["USDHKD", "美元/港币", "7.7932", "-0.01%", ""],
    ["USDJPY", "美元/日元", "115.08", "-0.03%", ""],
    ["EURindex", "欧元指数", "102.341", "-0.04%", ""],
    ["EURUSD", "欧元/美元", "1.1238", "-0.06%", "blue"],
    ["AUDUSD", "澳大利亚元/美元", "0.7217", "-0.18%", ""],
    ["XAGUSD", "白银/美元", "23.5600", "-0.41%", "flash-price flash-pct"],
    ["NZDUSD", "新西兰元/美元", "0.6919", "-0.43%", ""]
];

function drawRates() {
    let out = "";
    rates.forEach(([code, name, price, change, options]) => {
        const value = parseFloat(change);
        const trend = value > 0 ? "up" : value < 0 ? "fell" : "";
        const flash = value > 0 ? "flash-up" : "flash-down";
        const selected = options.includes("selected");
        const eye = selected ? `<svg class="eye" viewBox="0 0 14 12"><ellipse cx="7" cy="6" rx="6" ry="5"/><circle cx="7" cy="6" r="1"/></svg>` : "";
        out += `<tr class="${selected ? "selected" : ""}">
            <td><span>${code}</span></td>
            <td class="${options.includes("blue") ? "blue" : ""}"><span class="${selected ? "with-eye" : ""}">${name}${eye}</span></td>
            <td class="${trend} ${options.includes("flash-price") ? flash : ""}">${price}</td>
            <td class="${trend} ${options.includes("flash-pct") ? flash : ""}">${change}</td>
        </tr>`;
    });
    // empty rows keep the grid going to the bottom
    out += "<tr><td></td><td></td><td></td><td></td></tr>".repeat(12);
    document.getElementById("rates").innerHTML = out;
}

drawPrice();
drawMacd();
drawNavigator();
drawRates();
```
